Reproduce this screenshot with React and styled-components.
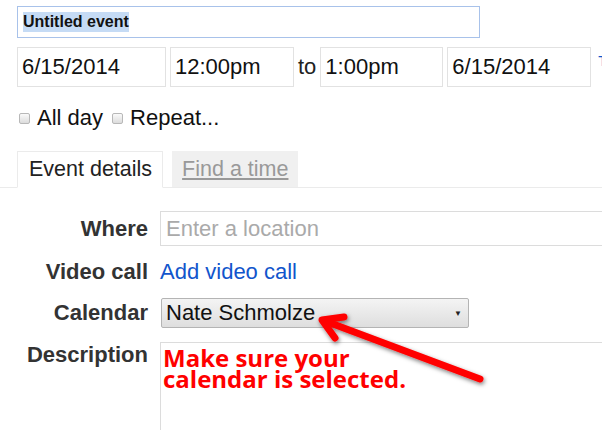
import React from "react";
import styled, { createGlobalStyle } from "styled-components";

const GlobalStyle = createGlobalStyle`
  html, body {
    margin: 0;
    padding: 0;
    background: #fff;
    overflow: hidden;
  }
  body {
    font-family: "Liberation Sans", Arial, sans-serif;
    color: #222;
  }
`;

const Page = styled.div`
  position: relative;
  width: 602px;
  height: 430px;
  overflow: hidden;
  padding: 6px 0 0 17px;
  box-sizing: border-box;
`;

const TitleBox = styled.div`
  width: 463px;
  height: 32px;
  box-sizing: border-box;
  border: 1px solid #a8c2ea;
  padding: 0 0 0 5px;
  display: flex;
  align-items: center;
`;

const Selected = styled.span`
  background: #c5dbf5;
  font-weight: bold;
  font-size: 16px;
  color: #111;
  line-height: 20px;
`;

const DateRow = styled.div`
  display: flex;
  align-items: center;
  margin-top: 9px;
  font-size: 22px;
  width: 700px;
`;

const Field = styled.div`
  flex-shrink: 0;
  width: ${(p) => p.w}px;
  height: 40px;
  box-sizing: border-box;
  border: 1px solid #e2e2e2;
  padding-left: 4px;
  margin-right: ${(p) => p.mr ?? 4}px;
  display: flex;
  align-items: center;
  color: #111;
`;

const To = styled.span`
  margin: 0 4px 0 4px;
  color: #222;
`;

const TzLink = styled.span`
  color: #15c;
  margin-left: 7px;
  font-size: 14px;
  position: relative;
  top: -6px;
`;

const CheckRow = styled.div`
  display: flex;
  align-items: center;
  margin-top: 18px;
  font-size: 22px;
  color: #111;
  padding-left: 2px;
`;

const Box = styled.span`
  width: 9px;
  height: 9px;
  border: 1px solid #b8b8b8;
  border-radius: 2px;
  background: linear-gradient(#fafafa, #dcdcdc);
  margin-right: 7px;
  display: inline-block;
`;

const CheckLabel = styled.span`
  margin-right: 9px;
`;

const Tabs = styled.div`
  display: flex;
  align-items: flex-end;
  margin-top: 19px;
  margin-left: -17px;
  padding-left: 17px;
  border-bottom: 1px solid #ebebeb;
  height: 37px;
`;

const Tab = styled.div`
  height: 37px;
  box-sizing: border-box;
  display: flex;
  align-items: center;
  font-size: 21.5px;
  margin-right: 9px;
  margin-bottom: -1px;
  ${(p) =>
    p.active
      ? `
    padding: 0 10px 0 11px;
    background: #fff;
    border: 1px solid #ebebeb;
    border-bottom-color: #fff;
    color: #222;
  `
      : `
    padding: 0 10px;
    background: #f0f0f0;
    height: 36px;
    margin-bottom: 0;
    color: #999;
    text-decoration: underline;
  `}
`;

const Form = styled.div`
  display: grid;
  grid-template-columns: 131px 1fr;
  column-gap: 12px;
  margin-top: 23px;
  align-items: center;
  font-size: 22px;
`;

const Label = styled.div`
  text-align: right;
  font-weight: bold;
  color: #333;
  align-self: ${(p) => (p.top ? "start" : "center")};
`;

const Input = styled.div`
  height: 35px;
  box-sizing: border-box;
  border: 1px solid #dcdcdc;
  margin-right: -4px;
  padding-left: 5px;
  display: flex;
  align-items: center;
  color: #aaa;
`;

const Link = styled.div`
  color: #1155cc;
  height: 52px;
  display: flex;
  align-items: center;
`;

const Select = styled.div`
  width: 308px;
  height: 30px;
  box-sizing: border-box;
  margin-left: 1px;
  border: 1px solid #b4b4b4;
  border-radius: 2px;
  background: linear-gradient(#f4f4f4, #dedede);
  display: flex;
  align-items: center;
  justify-content: space-between;
  padding: 0 6px 0 4px;
  color: #111;
`;

const Caret = styled.span`
  font-size: 8px;
  color: #222;
`;

const TextArea = styled.div`
  height: 100px;
  box-sizing: border-box;
  border: 1px solid #dcdcdc;
  margin-top: 14px;
  margin-right: -4px;
  padding: 4px 0 0 2px;
  font-family: "Open Sans", "Noto Sans", sans-serif;
  font-weight: bold;
  font-size: 24px;
  line-height: 21px;
  color: #f00;
`;

const DescLabel = styled(Label)`
  margin-top: 14px;
  line-height: 26px;
`;

const Overlay = styled.svg`
  position: absolute;
  left: 0;
  top: 0;
  pointer-events: none;
`;

export default function App() {
  return (
    <Page>
      <GlobalStyle />
      <TitleBox>
        <Selected>Untitled event</Selected>
      </TitleBox>
      <DateRow>
        <Field w={149}>6/15/2014</Field>
        <Field w={124} mr={0}>12:00pm</Field>
        <To>to</To>
        <Field w={123}>1:00pm</Field>
        <Field w={144} mr={0}>6/15/2014</Field>
        <TzLink>T</TzLink>
      </DateRow>
      <CheckRow>
        <Box />
        <CheckLabel>All day</CheckLabel>
        <Box />
        <CheckLabel>Repeat...</CheckLabel>
      </CheckRow>
      <Tabs>
        <Tab active>Event details</Tab>
        <Tab>Find a time</Tab>
      </Tabs>
      <Form>
        <Label>Where</Label>
        <Input>Enter a location</Input>
        <Label>Video call</Label>
        <Link>Add video call</Link>
        <Label>Calendar</Label>
        <Select>
          <span>Nate Schmolze</span>
          <Caret>▼</Caret>
        </Select>
        <DescLabel top>Description</DescLabel>
        <TextArea>
          Make sure your
          <br />
          calendar is selected.
        </TextArea>
      </Form>
      <Overlay width="602" height="430" viewBox="0 0 602 430">
        <defs>
          <filter id="sh" x="-20%" y="-20%" width="140%" height="140%">
            <feDropShadow dx="1" dy="2" stdDeviation="2" floodColor="#000" floodOpacity="0.5" />
          </filter>
        </defs>
        <g filter="url(#sh)" stroke="#f00" strokeLinecap="round" strokeLinejoin="round" fill="none">
          <line x1="480" y1="379" x2="325" y2="321" strokeWidth="7" />
          <polyline points="344,317 322,320 335,338" strokeWidth="7" />
        </g>
      </Overlay>
    </Page>
  );
}
